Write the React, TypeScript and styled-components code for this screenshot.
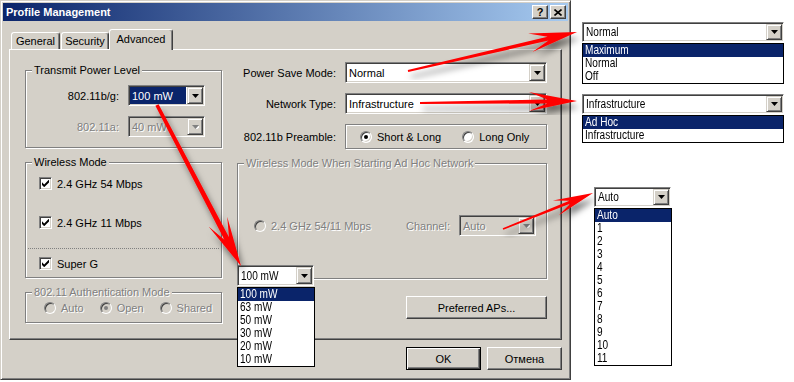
import React from 'react'
import styled, { createGlobalStyle, css } from 'styled-components'

const FACE = '#d4d0c8'
const SHADOW = '#808080'
const DARK = '#404040'
const NAVY = '#0a246a'
const UI_FONT = `'Liberation Sans', 'DejaVu Sans', sans-serif`
const NARROW_FONT = `'Liberation Sans Narrow', 'Liberation Sans', sans-serif`

const GlobalStyle = createGlobalStyle`
  html, body {
    margin: 0;
    padding: 0;
    background: #fff;
  }
  body {
    font-family: ${UI_FONT};
    font-size: 11px;
    color: #000;
  }
`

const Page = styled.div`
  position: relative;
  width: 794px;
  height: 382px;
  display: flex;
  align-items: flex-start;
  overflow: hidden;
  background: #fff;
`

const Window = styled.div`
  box-sizing: border-box;
  width: 571px;
  height: 380px;
  flex: none;
  padding: 2px;
  display: flex;
  flex-direction: column;
  background: ${FACE};
  border: 1px solid;
  border-color: ${FACE} ${DARK} ${DARK} ${FACE};
  box-shadow: inset 1px 1px #fff, inset -1px -1px ${SHADOW};
  font: 11px ${UI_FONT};
`

const TitleBar = styled.div`
  height: 18px;
  display: flex;
  align-items: center;
  padding: 0 2px 0 3px;
  background: linear-gradient(to right, ${NAVY}, #a6caf0);
`

const TitleText = styled.span`
  flex: 1;
  color: #fff;
  font-weight: bold;
  font-size: 11px;
`

const CaptionButton = styled.div`
  box-sizing: border-box;
  width: 16px;
  height: 14px;
  margin-left: 2px;
  display: flex;
  align-items: center;
  justify-content: center;
  background: ${FACE};
  border: 1px solid;
  border-color: #fff ${DARK} ${DARK} #fff;
  box-shadow: inset -1px -1px ${SHADOW};
  font-weight: bold;
  font-size: 11px;
  line-height: 1;
`

const Body = styled.div`
  display: flex;
  flex-direction: column;
  padding: 8px 6px 0 6px;
`

const TabStrip = styled.div`
  height: 20px;
  display: flex;
  align-items: flex-end;
  gap: 1px;
  padding-left: 2px;
`

const Tab = styled.div<{ $active?: boolean; $w: number }>`
  box-sizing: border-box;
  position: relative;
  width: ${(p) => p.$w}px;
  height: ${(p) => (p.$active ? 21 : 17)}px;
  margin-bottom: ${(p) => (p.$active ? -1 : 0)}px;
  margin-left: ${(p) => (p.$active ? -1 : 0)}px;
  z-index: ${(p) => (p.$active ? 1 : 0)};
  display: flex;
  align-items: center;
  justify-content: center;
  padding-bottom: ${(p) => (p.$active ? 2 : 0)}px;
  background: ${FACE};
  border: 1px solid;
  border-bottom: none;
  border-color: #fff ${DARK} transparent #fff;
  border-radius: 3px 3px 0 0;
  box-shadow: inset -1px 0 ${SHADOW};
`

const TabPanel = styled.div`
  box-sizing: border-box;
  width: 553px;
  height: 291px;
  display: flex;
  gap: 15px;
  padding-left: 15px;
  border: 1px solid;
  border-color: #fff ${DARK} ${DARK} #fff;
  box-shadow: inset -1px -1px ${SHADOW};
`

const Column = styled.div<{ $w: number; $pt: number }>`
  width: ${(p) => p.$w}px;
  padding-top: ${(p) => p.$pt}px;
  display: flex;
  flex-direction: column;
  gap: 8px;
`

const Group = styled.fieldset<{ $h: number }>`
  box-sizing: border-box;
  height: ${(p) => p.$h}px;
  margin: 0;
  padding: 0;
  min-width: 0;
  border: 1px solid ${SHADOW};
  box-shadow: inset 1px 1px #fff, 1px 1px #fff;
`

const disabledText = css`
  color: ${SHADOW};
  text-shadow: 1px 1px #fff;
`

const Legend = styled.legend<{ $disabled?: boolean }>`
  margin-left: 6px;
  padding: 0 2px;
  line-height: 13px;
  background: ${FACE};
  ${(p) => p.$disabled && disabledText}
`

const FieldGrid = styled.div<{ $label: number; $field: number; $pt: number; $pl: number }>`
  display: grid;
  grid-template-columns: ${(p) => p.$label}px ${(p) => p.$field}px;
  column-gap: 9px;
  row-gap: 10px;
  align-items: center;
  padding: ${(p) => p.$pt}px 0 0 ${(p) => p.$pl}px;
`

const FieldLabel = styled.span<{ $disabled?: boolean }>`
  text-align: right;
  white-space: nowrap;
  ${(p) => p.$disabled && disabledText}
`

const Combo = styled.div<{ $w: number; $h?: number; $disabled?: boolean }>`
  box-sizing: border-box;
  width: ${(p) => p.$w}px;
  height: ${(p) => p.$h ?? 21}px;
  display: flex;
  padding: 1px;
  border: 1px solid;
  border-color: ${SHADOW} #fff #fff ${SHADOW};
  box-shadow: inset 1px 1px ${DARK}, inset -1px -1px ${FACE};
  background: ${(p) => (p.$disabled ? FACE : '#fff')};
`

const ComboValue = styled.div<{ $selected?: boolean; $disabled?: boolean }>`
  flex: 1;
  display: flex;
  align-items: center;
  padding-left: 2px;
  margin-right: 1px;
  white-space: nowrap;
  overflow: hidden;
  background: ${(p) => (p.$selected ? NAVY : 'transparent')};
  color: ${(p) => (p.$selected ? '#fff' : '#000')};
  ${(p) => p.$disabled && disabledText}
`

const DropButtonBox = styled.div`
  box-sizing: border-box;
  width: 16px;
  height: 100%;
  flex: none;
  display: flex;
  align-items: center;
  justify-content: center;
  background: ${FACE};
  border: 1px solid;
  border-color: ${FACE} ${DARK} ${DARK} ${FACE};
  box-shadow: inset 1px 1px #fff, inset -1px -1px ${SHADOW};
`

const DropButton = ({ disabled }: { disabled?: boolean }) => (
  <DropButtonBox>
    <svg width="7" height="4" viewBox="0 0 7 4">
      {disabled && <path d="M1 1h7L4.5 5z" fill="#fff" />}
      <path d="M0 0h7L3.5 4z" fill={disabled ? SHADOW : '#000'} />
    </svg>
  </DropButtonBox>
)

const CheckRow = styled.label<{ $mt: number }>`
  display: flex;
  align-items: center;
  gap: 5px;
  height: 13px;
  margin-top: ${(p) => p.$mt}px;
  padding-left: 13px;
`

const CheckBox = styled.span`
  box-sizing: border-box;
  width: 13px;
  height: 13px;
  flex: none;
  display: flex;
  align-items: center;
  justify-content: center;
  background: #fff;
  border: 1px solid;
  border-color: ${SHADOW} #fff #fff ${SHADOW};
  box-shadow: inset 1px 1px ${DARK}, inset -1px -1px ${FACE};
`

const Check = () => (
  <CheckBox>
    <svg width="7" height="7" viewBox="0 0 7 7">
      <path d="M0 2.2 2.2 4.4 7 -0.4V2.4L2.2 7.2 0 5z" fill="#000" />
    </svg>
  </CheckBox>
)

const Divider = styled.div`
  margin: 19px 2px 0;
  border-top: 1px dotted ${SHADOW};
`

const RadioRow = styled.div<{ $gap: number; $pt: number; $pl: number }>`
  display: flex;
  align-items: center;
  gap: ${(p) => p.$gap}px;
  padding: ${(p) => p.$pt}px 0 0 ${(p) => p.$pl}px;
`

const RadioOption = styled.span<{ $disabled?: boolean }>`
  display: flex;
  align-items: center;
  gap: 5px;
  white-space: nowrap;
  ${(p) => p.$disabled && disabledText}
`

const RadioDot = styled.span<{ $checked?: boolean; $disabled?: boolean }>`
  box-sizing: border-box;
  width: 12px;
  height: 12px;
  flex: none;
  border-radius: 50%;
  display: flex;
  align-items: center;
  justify-content: center;
  background: ${(p) => (p.$disabled ? FACE : '#fff')};
  border: 1px solid;
  border-color: ${SHADOW} #fff #fff ${SHADOW};
  box-shadow: inset 1px 1px ${DARK}, inset -1px -1px ${FACE};
  &::after {
    content: '';
    display: ${(p) => (p.$checked ? 'block' : 'none')};
    width: 4px;
    height: 4px;
    border-radius: 50%;
    background: ${(p) => (p.$disabled ? SHADOW : '#000')};
  }
`

const EtchedBox = styled.div`
  box-sizing: border-box;
  height: 25px;
  display: flex;
  align-items: center;
  gap: 21px;
  padding-left: 14px;
  border: 1px solid ${SHADOW};
  box-shadow: inset 1px 1px #fff, 1px 1px #fff;
`

const AdHocRow = styled.div`
  display: flex;
  align-items: center;
  justify-content: space-between;
  padding: 45px 10px 0 16px;
`

const ChannelField = styled.div`
  display: flex;
  align-items: center;
  gap: 9px;
`

const PushButton = styled.div<{ $w: number; $default?: boolean }>`
  box-sizing: border-box;
  width: ${(p) => p.$w}px;
  height: 23px;
  flex: none;
  display: flex;
  align-items: center;
  justify-content: center;
  background: ${FACE};
  border: 1px solid;
  border-color: #fff ${DARK} ${DARK} #fff;
  box-shadow: inset -1px -1px ${SHADOW};
  ${(p) =>
    p.$default &&
    css`
      border-color: #000;
      box-shadow: inset 1px 1px #fff, inset -1px -1px ${DARK}, inset -2px -2px ${SHADOW};
    `}
`

const ApsRow = styled.div`
  display: flex;
  justify-content: flex-end;
  margin-top: 9px;
`

const Footer = styled.div`
  display: flex;
  justify-content: flex-end;
  gap: 6px;
  margin-top: 7px;
`

/* the cut-out drop-down lists pasted beside the dialog */
const Aside = styled.div`
  flex: 1;
  display: flex;
  flex-direction: column;
  align-items: flex-start;
  padding: 22px 0 0 11px;
`

const Callout = styled.div<{ $mt?: number; $ml?: number }>`
  margin-top: ${(p) => p.$mt ?? 0}px;
  margin-left: ${(p) => p.$ml ?? 0}px;
  font: 12px ${NARROW_FONT};
`

// the pasted lists were captured in a condensed face
const Narrow = styled.span`
  display: inline-block;
  white-space: nowrap;
  transform: scaleX(0.84);
  transform-origin: 0 50%;
`

const FloatingCallout = styled(Callout)`
  position: absolute;
  left: 237px;
  top: 265px;
  z-index: 2;
`

const DropList = styled.ul<{ $w: number }>`
  box-sizing: border-box;
  width: ${(p) => p.$w}px;
  margin: 1px 0 0;
  padding: 0;
  list-style: none;
  background: #fff;
  border: 1px solid #000;
`

const DropItem = styled.li<{ $selected?: boolean }>`
  height: 13px;
  line-height: 13px;
  padding-left: 2px;
  background: ${(p) => (p.$selected ? NAVY : 'transparent')};
  color: ${(p) => (p.$selected ? '#fff' : '#000')};
`

const ArrowLayer = styled.svg`
  position: absolute;
  left: 0;
  top: 0;
  z-index: 3;
  pointer-events: none;
`

type Arrow = { from: [number, number]; to: [number, number]; w0: number; w1: number; head: number; half: number }

const arrows: Arrow[] = [
  { from: [408, 71], to: [577, 32], w0: 1, w1: 2, head: 48, half: 9.5 },
  { from: [420, 103], to: [577, 101], w0: 1, w1: 2, head: 48, half: 9.5 },
  { from: [157, 105], to: [241, 266], w0: 1.8, w1: 2.6, head: 50, half: 10.5 },
  { from: [503, 229], to: [593, 193], w0: 0.8, w1: 1.5, head: 40, half: 8 },
]

const arrowPoints = ({ from, to, w0, w1, head, half }: Arrow) => {
  const [x1, y1] = from
  const [x2, y2] = to
  const len = Math.hypot(x2 - x1, y2 - y1)
  const ux = (x2 - x1) / len
  const uy = (y2 - y1) / len
  const nx = -uy
  const ny = ux
  const neck = head * 0.62
  const kx = x2 - ux * neck
  const ky = y2 - uy * neck
  const bx = x2 - ux * head
  const by = y2 - uy * head
  return [
    [x1 + nx * w0, y1 + ny * w0],
    [kx + nx * w1, ky + ny * w1],
    [bx + nx * half, by + ny * half],
    [x2, y2],
    [bx - nx * half, by - ny * half],
    [kx - nx * w1, ky - ny * w1],
    [x1 - nx * w0, y1 - ny * w0],
  ]
    .map(([x, y]) => `${x.toFixed(1)},${y.toFixed(1)}`)
    .join(' ')
}

const powerLevels = ['100 mW', '63 mW', '50 mW', '30 mW', '20 mW', '10 mW']
const channels = ['Auto', '1', '2', '3', '4', '5', '6', '7', '8', '9', '10', '11']

export default function App() {
  return (
    <Page>
      <GlobalStyle />
      <Window>
        <TitleBar>
          <TitleText>Profile Management</TitleText>
          <CaptionButton>?</CaptionButton>
          <CaptionButton>
            <svg width="8" height="7" viewBox="0 0 8 7">
              <path d="M0.5 0.5 7.5 6.5M7.5 0.5 0.5 6.5" stroke="#000" strokeWidth="1.6" />
            </svg>
          </CaptionButton>
        </TitleBar>

        <Body>
          <TabStrip>
            <Tab $w={49}>General</Tab>
            <Tab $w={48}>Security</Tab>
            <Tab $w={64} $active>
              Advanced
            </Tab>
          </TabStrip>

          <TabPanel>
            <Column $w={197} $pt={14}>
              <Group $h={84}>
                <Legend>Transmit Power Level</Legend>
                <FieldGrid $label={92} $field={77} $pt={8} $pl={1}>
                  <FieldLabel>802.11b/g:</FieldLabel>
                  <Combo $w={77}>
                    <ComboValue $selected>100 mW</ComboValue>
                    <DropButton />
                  </Combo>
                  <FieldLabel $disabled>802.11a:</FieldLabel>
                  <Combo $w={77} $disabled>
                    <ComboValue $disabled>40 mW</ComboValue>
                    <DropButton disabled />
                  </Combo>
                </FieldGrid>
              </Group>

              <Group $h={122}>
                <Legend>Wireless Mode</Legend>
                <CheckRow $mt={8}>
                  <Check />
                  2.4 GHz 54 Mbps
                </CheckRow>
                <CheckRow $mt={26}>
                  <Check />
                  2.4 GHz 11 Mbps
                </CheckRow>
                <Divider />
                <CheckRow $mt={8}>
                  <Check />
                  Super G
                </CheckRow>
              </Group>

              <Group $h={37}>
                <Legend $disabled>802.11 Authentication Mode</Legend>
                <RadioRow $gap={16} $pt={3} $pl={18}>
                  <RadioOption $disabled>
                    <RadioDot $disabled />
                    Auto
                  </RadioOption>
                  <RadioOption $disabled>
                    <RadioDot $disabled $checked />
                    Open
                  </RadioOption>
                  <RadioOption $disabled>
                    <RadioDot $disabled />
                    Shared
                  </RadioOption>
                </RadioRow>
              </Group>
            </Column>

            <Column $w={310} $pt={12}>
              <FieldGrid $label={99} $field={202} $pt={0} $pl={0}>
                <FieldLabel>Power Save Mode:</FieldLabel>
                <Combo $w={202}>
                  <ComboValue>Normal</ComboValue>
                  <DropButton />
                </Combo>
                <FieldLabel>Network Type:</FieldLabel>
                <Combo $w={202}>
                  <ComboValue>Infrastructure</ComboValue>
                  <DropButton />
                </Combo>
                <FieldLabel>802.11b Preamble:</FieldLabel>
                <EtchedBox>
                  <RadioOption>
                    <RadioDot $checked />
                    Short &amp; Long
                  </RadioOption>
                  <RadioOption>
                    <RadioDot />
                    Long Only
                  </RadioOption>
                </EtchedBox>
              </FieldGrid>

              <Group $h={122}>
                <Legend $disabled>Wireless Mode When Starting Ad Hoc Network</Legend>
                <AdHocRow>
                  <RadioOption $disabled>
                    <RadioDot $disabled />
                    2.4 GHz 54/11 Mbps
                  </RadioOption>
                  <ChannelField>
                    <FieldLabel $disabled>Channel:</FieldLabel>
                    <Combo $w={77} $disabled>
                      <ComboValue $disabled>Auto</ComboValue>
                      <DropButton disabled />
                    </Combo>
                  </ChannelField>
                </AdHocRow>
              </Group>

              <ApsRow>
                <PushButton $w={141}>Preferred APs...</PushButton>
              </ApsRow>
            </Column>
          </TabPanel>

          <Footer>
            <PushButton $w={75} $default>
              OK
            </PushButton>
            <PushButton $w={75}>Отмена</PushButton>
          </Footer>
        </Body>
      </Window>

      <Aside>
        <Callout>
          <Combo $w={202} $h={20}>
            <ComboValue>
              <Narrow>Normal</Narrow>
            </ComboValue>
            <DropButton />
          </Combo>
          <DropList $w={202}>
            {['Maximum', 'Normal', 'Off'].map((m, i) => (
              <DropItem key={m} $selected={i === 0}>
                <Narrow>{m}</Narrow>
              </DropItem>
            ))}
          </DropList>
        </Callout>

        <Callout $mt={10}>
          <Combo $w={202} $h={20}>
            <ComboValue>
              <Narrow>Infrastructure</Narrow>
            </ComboValue>
            <DropButton />
          </Combo>
          <DropList $w={202}>
            {['Ad Hoc', 'Infrastructure'].map((t, i) => (
              <DropItem key={t} $selected={i === 0}>
                <Narrow>{t}</Narrow>
              </DropItem>
            ))}
          </DropList>
        </Callout>

        <Callout $mt={44} $ml={12}>
          <Combo $w={77} $h={20}>
            <ComboValue>
              <Narrow>Auto</Narrow>
            </ComboValue>
            <DropButton />
          </Combo>
          <DropList $w={78}>
            {channels.map((c, i) => (
              <DropItem key={c} $selected={i === 0}>
                <Narrow>{c}</Narrow>
              </DropItem>
            ))}
          </DropList>
        </Callout>
      </Aside>

      <FloatingCallout>
        <Combo $w={77} $h={21}>
          <ComboValue>
            <Narrow>100 mW</Narrow>
          </ComboValue>
          <DropButton />
        </Combo>
        <DropList $w={78}>
          {powerLevels.map((p, i) => (
            <DropItem key={p} $selected={i === 0}>
              <Narrow>{p}</Narrow>
            </DropItem>
          ))}
        </DropList>
      </FloatingCallout>

      <ArrowLayer width="794" height="382" viewBox="0 0 794 382">
        <defs>
          <filter id="arrowShadow" x="-20%" y="-20%" width="140%" height="140%">
            <feDropShadow dx="3" dy="6" stdDeviation="3" floodColor="#000" floodOpacity="0.5" />
          </filter>
        </defs>
        {arrows.map((a, i) => (
          <polygon key={i} points={arrowPoints(a)} fill="#ff0000" filter="url(#arrowShadow)" />
        ))}
      </ArrowLayer>
    </Page>
  )
}
